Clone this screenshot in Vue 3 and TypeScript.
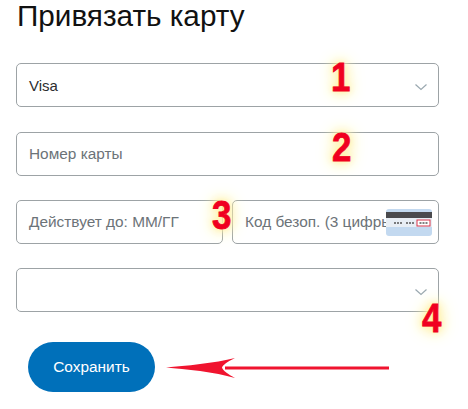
<template>
  <div class="page">
    <h1 class="title">Привязать карту</h1>
    <form class="card-form" @submit.prevent>
      <div class="field select first">
        <span class="value">Visa</span>
        <svg class="chevron" width="14" height="8" viewBox="0 0 14 8"><path d="M1.5 1.5 7 6.5l5.5-5" /></svg>
      </div>
      <div class="field">
        <span class="placeholder">Номер карты</span>
      </div>
      <div class="row">
        <div class="field half">
          <span class="placeholder">Действует до: ММ/ГГ</span>
        </div>
        <div class="field half">
          <span class="placeholder">Код безоп. (3 цифры)</span>
          <svg class="cvv-card" width="46" height="27" viewBox="0 0 46 27">
            <rect width="46" height="27" rx="3" fill="#c3d9f0" />
            <rect y="3" width="46" height="6" fill="#4a4a4e" />
            <rect y="9" width="46" height="9" fill="#e8eef5" />
            <path d="M8 14h8M20 14h9" stroke="#555" stroke-width="1.5" stroke-dasharray="2 1" />
            <rect x="31" y="11" width="13" height="6" fill="#fff" stroke="#d8344a" />
            <path d="M33.5 14h8" stroke="#555" stroke-width="1.5" stroke-dasharray="2 1" />
          </svg>
        </div>
      </div>
      <div class="field select">
        <svg class="chevron" width="14" height="8" viewBox="0 0 14 8"><path d="M1.5 1.5 7 6.5l5.5-5" /></svg>
      </div>
      <div class="actions">
        <button class="save" type="button">Сохранить</button>
      </div>
    </form>

    <span
      v-for="mark in marks"
      :key="mark.label"
      class="mark"
      :style="{ left: mark.x + 'px', top: mark.y + 'px' }"
    >{{ mark.label }}</span>

    <svg class="arrow" width="226" height="22" viewBox="0 0 226 22">
      <path d="M224 9.5H60v3h164z" fill="#f0142f" />
      <path d="M1 10.5C20 9 50 6 70 1 62 5 58 8 57 10.5 58 14 63 17 70 21 50 15 20 12 1 10.5z" fill="#f0142f" />
    </svg>
  </div>
</template>

<script setup lang="ts">
const marks = [
  { label: '1', x: 331, y: 57 },
  { label: '2', x: 332, y: 127 },
  { label: '3', x: 212, y: 195 },
  { label: '4', x: 422, y: 298 },
]
</script>

<style>
html,
body {
  margin: 0;
  background: #fff;
}
</style>

<style scoped>
.page {
  position: relative;
  width: 468px;
  height: 409px;
  overflow: hidden;
  box-sizing: border-box;
  padding: 0 29px 0 16px;
  font-family: "Liberation Sans", Arial, sans-serif;
  color: #2c2e2f;
}

.title {
  margin: 0;
  padding: 0 0 0 1px;
  font-size: 29.7px;
  line-height: 31px;
  font-weight: 400;
  color: #111;
}

.card-form {
  display: flex;
  flex-direction: column;
  gap: 24px;
  margin-top: 32px;
}

.field {
  display: flex;
  align-items: center;
  box-sizing: border-box;
  height: 44px;
  padding: 0 12px;
  background: #fff;
  border: 1px solid #9da3a6;
  border-radius: 5px;
  font-size: 15.4px;
  position: relative;
}

.first {
  margin-bottom: 1px;
}

.value {
  color: #2c2e2f;
  font-size: 15px;
}

.placeholder {
  color: #6c7378;
  white-space: nowrap;
}

.chevron {
  position: absolute;
  right: 10px;
  top: 19px;
  fill: none;
  stroke: #9aa8b0;
  stroke-width: 1.2;
}

.row {
  display: flex;
  gap: 9px;
}

.half {
  width: 207px;
}

.cvv-card {
  position: absolute;
  right: 6px;
  top: 8px;
}

.actions {
  padding: 6px 0 0 12px;
}

.save {
  display: block;
  width: 127px;
  height: 50px;
  border: 0;
  border-radius: 25px;
  background: #0070ba;
  color: #fff;
  font-family: inherit;
  font-size: 15.4px;
}

.mark {
  position: absolute;
  font-size: 41px;
  line-height: 40px;
  font-weight: 700;
  color: #f00020;
  -webkit-text-stroke: 0.8px #f00020;
  text-shadow: 0 0 6px #fff3a8, 0 0 12px #fff0a0, 0 0 16px #fff0a0, 0 0 22px #fff3b8;
  transform: scaleX(0.85);
  transform-origin: left center;
}

.arrow {
  position: absolute;
  left: 165px;
  top: 357px;
}
</style>
